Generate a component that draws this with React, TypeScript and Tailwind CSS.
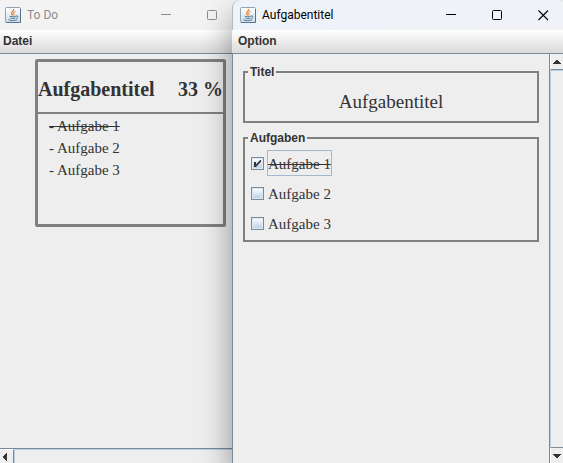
import { useState, type ReactNode } from 'react';

const serif = "font-['Liberation_Serif',serif]";
const sans = "font-['Liberation_Sans',sans-serif]";

function JavaIcon() {
  return (
    <svg width="16" height="16" viewBox="0 0 16 16" fill="none" aria-hidden="true" className="shrink-0">
      <defs>
        <linearGradient id="frame" x1="0" y1="0" x2="0" y2="1">
          <stop offset="0" stopColor="#ffffff" />
          <stop offset="1" stopColor="#cfdce8" />
        </linearGradient>
      </defs>
      <rect x="0.5" y="0.5" width="15" height="15" rx="1" fill="url(#frame)" stroke="#8fa3b5" />
      <path d="M15.5 2V15.5H1" stroke="#57748f" />
      <path d="M8.6 2C9.6 4 5.6 4.8 6.8 7.2L7.6 8.4" stroke="#e8792b" strokeWidth="1.3" />
      <path d="M10.6 4.3C8.6 5.2 8.3 6 9 7.2L8.6 8.6" stroke="#e8792b" />
      <path d="M4.6 9.2C6 9.9 9 9.9 10.8 9.2M5.4 11C7 11.6 9 11.5 10.4 11" stroke="#4f7896" />
      <path d="M11 9C13.6 8.4 13.4 10.8 11.2 11.4" stroke="#4f7896" />
      <path d="M3.2 12.4C4 13.8 10.5 13.8 12.2 12.6" stroke="#4f7896" />
    </svg>
  );
}

function MinimizeIcon() {
  return (
    <svg width="11" height="11" viewBox="0 0 11 11" stroke="currentColor" fill="none">
      <path d="M0 4.5H10" />
    </svg>
  );
}

function MaximizeIcon() {
  return (
    <svg width="11" height="11" viewBox="0 0 11 11" stroke="currentColor" fill="none">
      <rect x="0.5" y="0.5" width="9" height="9" rx="1" />
    </svg>
  );
}

function CloseIcon() {
  return (
    <svg width="11" height="11" viewBox="0 0 11 11" stroke="currentColor" strokeWidth="1.1" fill="none">
      <path d="M0.5 0.5L10 10M10 0.5L0.5 10" />
    </svg>
  );
}

function CaptionButton({ label, children }: { label: string; children: ReactNode }) {
  return (
    <button type="button" aria-label={label} className="flex h-full w-[46px] items-center justify-center">
      {children}
    </button>
  );
}

function MenuBar({ label, className }: { label: string; className: string }) {
  return (
    <nav
      className={`flex h-6 shrink-0 items-center border-b border-[#7a8a99] bg-linear-to-b from-white to-[#dadada] pb-0.5 ${className}`}
    >
      <button type="button" className={`${sans} text-xs leading-4 font-bold text-[#333333]`}>
        {label}
      </button>
    </nav>
  );
}

function Arrow({ direction }: { direction: 'up' | 'down' | 'left' }) {
  const paths = {
    up: 'M3 0h2v1h1v1h1v1h1v1H0V3h1V2h1V1h1z',
    down: 'M0 0h8v1H7v1H6v1H5v1H3V3H2V2H1V1H0z',
    left: 'M4 0v8H3V7H2V6H1V5H0V3h1V2h1V1h1V0z',
  };
  return (
    <svg
      width={direction === 'left' ? 4 : 8}
      height={direction === 'left' ? 8 : 4}
      fill="#333333"
      shapeRendering="crispEdges"
      aria-hidden="true"
    >
      <path d={paths[direction]} />
    </svg>
  );
}

function Group({ title, className, children }: { title: string; className: string; children: ReactNode }) {
  return (
    <fieldset className={`border-2 border-[#808080] px-1.5 ${className}`}>
      <legend className={`${sans} -ml-[3px] px-0.5 text-xs leading-3 font-bold text-[#333333]`}>{title}</legend>
      {children}
    </fieldset>
  );
}

function TaskCheckbox({
  name,
  done,
  focused,
  onToggle,
}: {
  name: string;
  done: boolean;
  focused: boolean;
  onToggle: () => void;
}) {
  return (
    <label className="flex h-[30px] items-center gap-[3px]">
      <span className="grid size-[13px]">
        <input
          type="checkbox"
          checked={done}
          onChange={onToggle}
          className="peer col-start-1 row-start-1 size-[13px] appearance-none border border-[#7a8a99] bg-linear-to-b from-white to-[#b8cfe5] shadow-[inset_0_0_0_1px_#dce8f4] outline-none"
        />
        <svg
          viewBox="0 0 13 13"
          fill="#333333"
          aria-hidden="true"
          className="pointer-events-none invisible col-start-1 row-start-1 size-[13px] peer-checked:visible"
        >
          <path d="M3 5H5V7.4L9.2 3H10V4.8L5 10H3Z" />
        </svg>
      </span>
      <span
        className={`${serif} border pt-[3px] pb-px text-[15px] leading-5 text-[#333333] ${
          focused ? 'border-[#a3b8cc]' : 'border-transparent'
        } ${done ? 'line-through' : ''}`}
      >
        {name}
      </span>
    </label>
  );
}

export default function App() {
  const [tasks, setTasks] = useState([
    { name: 'Aufgabe 1', done: true },
    { name: 'Aufgabe 2', done: false },
    { name: 'Aufgabe 3', done: false },
  ]);
  const [focused, setFocused] = useState(0);
  const percent = Math.floor((tasks.filter((t) => t.done).length / tasks.length) * 100);

  const toggle = (index: number) => {
    setFocused(index);
    setTasks(tasks.map((t, i) => (i === index ? { ...t, done: !t.done } : t)));
  };

  return (
    <div className="flex h-screen overflow-hidden bg-[#eeeeee]">
      <section className="-mr-2 flex w-60 shrink-0 flex-col">
        <header className="flex h-[30px] shrink-0 items-center bg-[#f3f3f3] pr-[5px] pl-[5px] text-[#8c8c8c]">
          <JavaIcon />
          <h1 className="ml-1.5 grow font-['Roboto',sans-serif] text-xs">To Do</h1>
          <CaptionButton label="Minimieren">
            <MinimizeIcon />
          </CaptionButton>
          <CaptionButton label="Maximieren">
            <MaximizeIcon />
          </CaptionButton>
        </header>
        <MenuBar label="Datei" className="pl-[3px]" />
        <main className="grow pt-[5px] pr-3.5 pl-[35px]">
          <article className={`${serif} h-[168px] rounded-xs border-3 border-[#808080] text-[#333333]`}>
            <h2 className="flex h-[52px] items-center justify-between border-b-2 border-[#808080] pt-1 text-xl font-bold">
              <span>Aufgabentitel</span>
              <span>{percent} %</span>
            </h2>
            <ul className="pt-px pl-[11px] text-[15px] leading-[22px]">
              {tasks.map((t) => (
                <li key={t.name} className={t.done ? 'line-through' : ''}>
                  - {t.name}
                </li>
              ))}
            </ul>
          </article>
        </main>
        <div className="flex h-[15px] shrink-0 border-t border-[#7a8a99]">
          <button
            type="button"
            aria-label="Nach links"
            className="flex w-3.5 items-center border-t border-r border-t-white border-r-[#7a8a99] pl-[3px]"
          >
            <Arrow direction="left" />
          </button>
          <div className="grow border-t border-l border-[#b8cfe5]" />
        </div>
      </section>

      <section className="z-10 flex min-w-0 grow flex-col rounded-t-lg bg-[#eeeeee] shadow-[0_16px_32px_rgba(0,0,0,0.4)]">
        <header className="-mr-[3px] flex h-[30px] shrink-0 items-center rounded-t-lg border-l border-[#b4b8bc] bg-linear-to-r from-[#edf3f9] to-[#f1f2f7] pl-[7px] text-black">
          <JavaIcon />
          <h1 className="ml-1.5 grow font-['Roboto',sans-serif] text-xs">Aufgabentitel</h1>
          <CaptionButton label="Minimieren">
            <MinimizeIcon />
          </CaptionButton>
          <CaptionButton label="Maximieren">
            <MaximizeIcon />
          </CaptionButton>
          <CaptionButton label="Schließen">
            <CloseIcon />
          </CaptionButton>
        </header>
        <MenuBar label="Option" className="pl-1.5" />
        <div className="flex grow border-l border-[#7a8a99]">
          <main className="grow px-2.5 pt-3">
            <Group title="Titel" className="h-[57px]">
              <p className={`${serif} pt-3 text-center text-[19px] leading-6 text-[#333333]`}>Aufgabentitel</p>
            </Group>
            <Group title="Aufgaben" className="mt-[9px] h-[110px]">
              <div className="pt-1">
                {tasks.map((t, i) => (
                  <TaskCheckbox
                    key={t.name}
                    name={t.name}
                    done={t.done}
                    focused={i === focused}
                    onToggle={() => toggle(i)}
                  />
                ))}
              </div>
            </Group>
          </main>
          <div className="flex w-3.5 shrink-0 flex-col border-l border-[#7a8a99]">
            <button
              type="button"
              aria-label="Nach oben"
              className="flex h-4 items-center justify-center border-b border-l border-b-[#7a8a99] border-l-white"
            >
              <Arrow direction="up" />
            </button>
            <div className="grow border-t border-l border-[#b8cfe5]" />
            <button
              type="button"
              aria-label="Nach unten"
              className="flex h-4 items-center justify-center border-t border-l border-t-[#7a8a99] border-l-white"
            >
              <Arrow direction="down" />
            </button>
          </div>
        </div>
      </section>
    </div>
  );
}
